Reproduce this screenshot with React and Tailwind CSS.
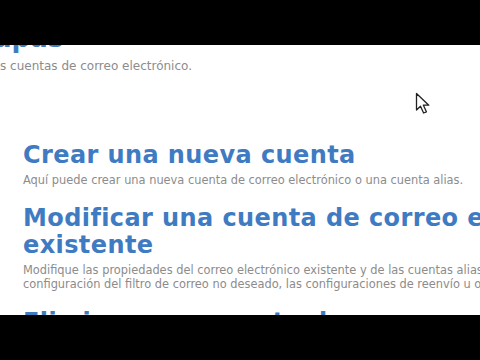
import { useState } from "react";

function Cursor() {
    return (
        <svg
            className="absolute left-[415px] top-[47px]"
            width="20"
            height="24"
            viewBox="0 0 20 24"
        >
            <path
                d="M1.5 1.5 L1.5 18 L5.5 14.2 L8.6 21 L11.4 19.8 L8.4 13.2 L13.8 13.2 Z"
                fill="#fff"
                stroke="#222"
                strokeWidth="1.3"
                strokeLinejoin="round"
            />
        </svg>
    );
}

function Section({ title, children }) {
    return (
        <div className="pl-[23px]">
            <h2 className="font-['DejaVu_Sans',sans-serif] font-bold text-[24px] tracking-[0.4px] leading-[27px] text-[#3f7bc2] whitespace-pre">
                {title}
            </h2>
            <div className="mt-[4px] font-['DejaVu_Sans',sans-serif] text-[11.4px] leading-[14px] text-[#8c8c8c] whitespace-pre">
                {children}
            </div>
        </div>
    );
}

export default function App() {
    const [sections] = useState([
        {
            title: "Crear una nueva cuenta",
            text: "Aquí puede crear una nueva cuenta de correo electrónico o una cuenta alias.",
        },
        {
            title: "Modificar una cuenta de correo electrónico\nexistente",
            text:
                "Modifique las propiedades del correo electrónico existente y de las cuentas alias, la\nconfiguración del filtro de correo no deseado, las configuraciones de reenvío u otras opciones.",
        },
        {
            title: "Eliminar una cuenta de correo",
            text: "Elimine una cuenta existente.",
        },
    ]);

    return (
        <div className="w-[480px] h-[360px] bg-black flex flex-col overflow-hidden">
            <div className="h-[45px] shrink-0 bg-black" />
            <div className="relative h-[270px] shrink-0 bg-white overflow-hidden">
                <h1 className="-mt-[22px] -ml-[6px] font-['DejaVu_Sans',sans-serif] font-bold text-[26px] leading-[30px] text-[#3f7bc2]">
                    apas
                </h1>
                <p className="mt-[6px] font-['DejaVu_Sans',sans-serif] text-[12px] leading-[14px] text-[#8c8c8c] whitespace-nowrap">
                    s cuentas de correo electrónico.
                </p>
                <div className="mt-[69px] flex flex-col gap-[18px]">
                    {sections.map(section => (
                        <Section key={section.title} title={section.title}>
                            {section.text}
                        </Section>
                    ))}
                </div>
                <Cursor />
            </div>
            <div className="h-[45px] shrink-0 bg-black" />
        </div>
    );
}
